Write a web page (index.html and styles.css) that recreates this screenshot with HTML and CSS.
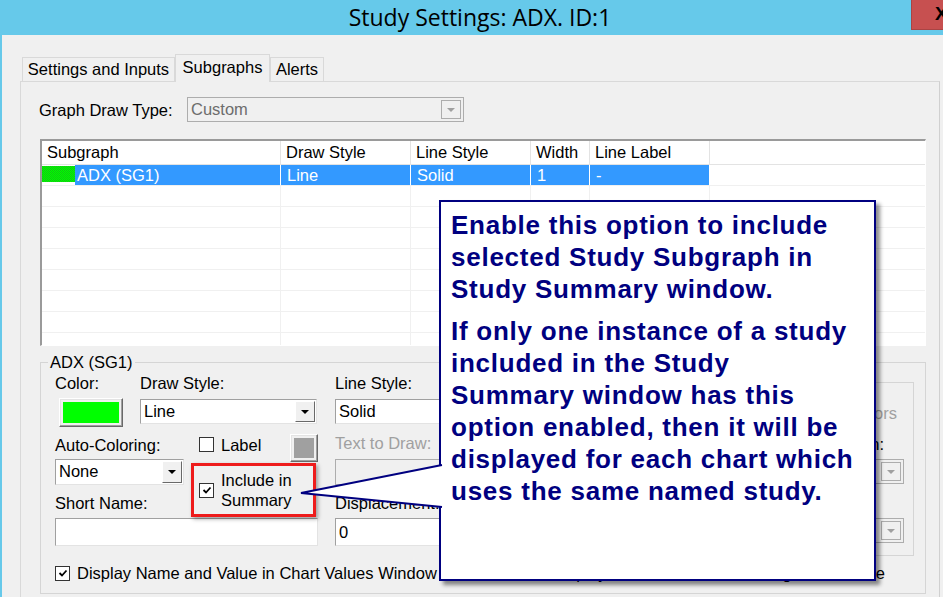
FILE: index.html
```
<!DOCTYPE html>
<html>
<head>
<meta charset="utf-8">
<title>Study Settings: ADX. ID:1</title>
<link rel="stylesheet" href="styles.css">
</head>
<body>
<div class="window">
  <div class="titlebar">
    <div class="title">Study Settings: ADX. ID:1</div>
    <div class="close">X</div>
  </div>
  <div class="client">
    <div class="tabs">
      <div class="tab t1">Settings and Inputs</div>
      <div class="tab active t2">Subgraphs</div>
      <div class="tab t3">Alerts</div>
    </div>
    <div class="panel">
      <div class="drawtype">
        <span class="dt-label">Graph Draw Type:</span>
        <div class="combo disabled w-custom"><span class="val">Custom</span><span class="btn"><i class="arrow"></i></span></div>
      </div>

      <div class="table">
        <div class="tr thead">
          <div class="td">Subgraph</div>
          <div class="td">Draw Style</div>
          <div class="td">Line Style</div>
          <div class="td">Width</div>
          <div class="td">Line Label</div>
          <div class="td last"></div>
        </div>
        <div class="tr sel">
          <div class="td first"><span class="swatch"></span><span class="selname">ADX (SG1)</span></div>
          <div class="td">Line</div>
          <div class="td">Solid</div>
          <div class="td">1</div>
          <div class="td">-</div>
          <div class="td last"></div>
        </div>
        <div class="tr"><div class="td"></div><div class="td"></div><div class="td"></div><div class="td"></div><div class="td"></div><div class="td last"></div></div>
        <div class="tr"><div class="td"></div><div class="td"></div><div class="td"></div><div class="td"></div><div class="td"></div><div class="td last"></div></div>
        <div class="tr"><div class="td"></div><div class="td"></div><div class="td"></div><div class="td"></div><div class="td"></div><div class="td last"></div></div>
        <div class="tr"><div class="td"></div><div class="td"></div><div class="td"></div><div class="td"></div><div class="td"></div><div class="td last"></div></div>
        <div class="tr"><div class="td"></div><div class="td"></div><div class="td"></div><div class="td"></div><div class="td"></div><div class="td last"></div></div>
        <div class="tr"><div class="td"></div><div class="td"></div><div class="td"></div><div class="td"></div><div class="td"></div><div class="td last"></div></div>
        <div class="tr"><div class="td"></div><div class="td"></div><div class="td"></div><div class="td"></div><div class="td"></div><div class="td last"></div></div>
        <div class="tr"><div class="td"></div><div class="td"></div><div class="td"></div><div class="td"></div><div class="td"></div><div class="td last"></div></div>
      </div>

      <fieldset class="group">
        <legend>ADX (SG1)</legend>
        <div class="gtop">
          <div class="colL">
            <div class="rowA">
              <div class="colorCol">
                <div class="lbl">Color:</div>
                <div class="colorbtn"><span class="green"></span></div>
              </div>
              <div class="drawCol">
                <div class="lbl">Draw Style:</div>
                <div class="combo w-draw"><span class="val">Line</span><span class="btn"><i class="arrow"></i></span></div>
              </div>
            </div>
            <div class="rowB">
              <div class="acCol">
                <div class="lbl lbl-ac">Auto-Coloring:</div>
                <div class="combo w-ac"><span class="val">None</span><span class="btn"><i class="arrow"></i></span></div>
                <div class="lbl lbl-sn">Short Name:</div>
              </div>
              <div class="rightCol">
                <div class="lblLine">
                  <span class="cb"></span><span class="cbtext">Label</span>
                  <div class="graybtn"><span class="gray"></span></div>
                </div>
                <div class="redbox">
                  <span class="cb checked"><svg viewBox="0 0 12 12" width="12" height="12"><path d="M2.5 6 L5 8.5 L9.5 3.5" fill="none" stroke="#000" stroke-width="1.8"/></svg></span>
                  <span class="rbtext">Include in<br>Summary</span>
                </div>
              </div>
            </div>
            <div class="input w-sn"></div>
          </div>

          <div class="colM">
            <div class="lbl">Line Style:</div>
            <div class="combo w-mid"><span class="val">Solid</span><span class="btn"><i class="arrow"></i></span></div>
            <div class="lbl dim lbl-ttd">Text to Draw:</div>
            <div class="input disabled-input w-mid ttd"></div>
            <div class="lbl lbl-disp">Displacement:</div>
            <div class="input w-mid disp"><span class="val">0</span></div>
          </div>

          <div class="colR">
            <div class="innergroup">
              <div class="ig-colors dim">Colors</div>
              <div class="ig-label">Position:</div>
              <div class="combo disabled w-ig ig-c1"><span class="val"></span><span class="btn"><i class="arrow"></i></span></div>
              <div class="combo disabled w-ig ig-c2"><span class="val"></span><span class="btn"><i class="arrow"></i></span></div>
            </div>
          </div>
        </div>

        <div class="gbottom">
          <span class="cb checked"><svg viewBox="0 0 12 12" width="12" height="12"><path d="M2.5 6 L5 8.5 L9.5 3.5" fill="none" stroke="#000" stroke-width="1.8"/></svg></span>
          <span class="cbtext">Display Name and Value in Chart Values Window</span>
          <span class="cb checked second"><svg viewBox="0 0 12 12" width="12" height="12"><path d="M2.5 6 L5 8.5 L9.5 3.5" fill="none" stroke="#000" stroke-width="1.8"/></svg></span>
          <span class="cbtext second-text">Display Value in Data Line Using Same Scale</span>
        </div>
      </fieldset>
    </div>
  </div>

  <div class="callout">
    <p>Enable this option to include<br>selected Study Subgraph in<br>Study Summary window.</p>
    <p>If only one instance of a study<br>included in the Study<br>Summary window has this<br>option enabled, then it will be<br>displayed for each chart which<br>uses the same named study.</p>
  </div>
  <svg class="pointer" width="150" height="50" viewBox="0 0 150 50">
    <polygon points="3,31 144,3 148,3 148,45 144,45" fill="#fff"/>
    <polyline points="144,3 3,31 144,45" fill="none" stroke="#000080" stroke-width="2"/>
  </svg>
</div>
</body>
</html>
```

FILE: styles.css
```
* { box-sizing: border-box; }
html, body { margin: 0; padding: 0; }
body {
  width: 943px;
  height: 597px;
  overflow: hidden;
  background: #f0f0f0;
  font-family: "Liberation Sans", Arial, sans-serif;
  font-size: 16.5px;
  color: #000;
}
.window {
  position: relative;
  width: 943px;
  height: 597px;
  border-left: 2px solid #66c9ea;
  background: #f0f0f0;
  overflow: hidden;
}

/* title bar */
.titlebar {
  display: flex;
  height: 35px;
  margin-left: -2px;
  background: #66c9ea;
}
.title {
  flex: 1;
  text-align: center;
  padding-left: 49px;
  font-family: "Open Sans", "Noto Sans", sans-serif;
  font-size: 23px;
  line-height: 35px;
  color: #000;
}
.close {
  width: 32px;
  height: 30px;
  background: #c75050;
  border-left: 1px solid #a94444;
  border-bottom: 1px solid #a94444;
  font-family: "Liberation Sans", Arial, sans-serif;
  font-weight: bold;
  font-size: 19px;
  line-height: 28px;
  padding-left: 23px;
  overflow: hidden;
  white-space: nowrap;
}

/* client area */
.client {
  padding: 19px 0 0 18px;
}
.tabs {
  display: flex;
  align-items: flex-end;
  height: 27px;
  margin-left: 2px;
  position: relative;
  z-index: 2;
}
.tab {
  height: 24px;
  border: 1px solid #d9d9d9;
  border-bottom: none;
  background: #f0f0f0;
  text-align: center;
  line-height: 23px;
  white-space: nowrap;
}
.t1 { width: 153px; }
.t2 { width: 95px; height: 28px; line-height: 25px; margin-bottom: -1px; }
.t3 { width: 54px; }

.panel {
  width: 920px;
  height: 540px;
  border: 1px solid #d9d9d9;
  border-right-color: #d0d0d0;
  padding: 15px 0 0 18px;
}
.drawtype {
  display: flex;
  align-items: center;
  height: 25px;
}
.dt-label { width: 148px; padding-top: 2px; }

/* combos */
.combo {
  display: flex;
  height: 25px;
  background: #fff;
  border: 1px solid;
  border-color: #a0a0a0 #e3e3e3 #e3e3e3 #a0a0a0;
}
.combo .val {
  flex: 1;
  padding-left: 3px;
  line-height: 22px;
  white-space: nowrap;
  overflow: hidden;
}
.combo .btn {
  width: 20px;
  margin: 1px;
  border: 1px solid;
  border-color: #fff #696969 #696969 #fff;
  background: #f0f0f0;
  display: flex;
  align-items: center;
  justify-content: center;
}
.arrow {
  width: 0;
  height: 0;
  border-left: 4px solid transparent;
  border-right: 4px solid transparent;
  border-top: 4px solid #000;
}
.combo.disabled {
  background: #f0f0f0;
  border-color: #adadad;
  color: #6d6d6d;
}
.combo.disabled .btn { border-color: #adadad; margin: 2px 2px 2px 0; }
.combo.disabled .arrow { border-top-color: #a0a0a0; }
.w-custom { width: 277px; }
.w-draw { width: 177px; }
.w-ac { width: 129px; height: 26px; }
.w-mid { width: 215px; }
.w-ig { width: 200px; }

/* table */
.table {
  width: 886px;
  height: 207px;
  margin: 17px 0 0 1px;
  background: #fff;
  border-top: 2px solid #9a9a9a;
  border-left: 2px solid #9a9a9a;
  border-right: 1px solid #fff;
  border-bottom: 1px solid #fff;
  overflow: hidden;
}
.tr {
  display: grid;
  grid-template-columns: 239px 130px 120px 59px 120px 1fr;
  height: 21px;
  border-bottom: 1px solid #f0f0f0;
}
.td {
  border-right: 1px solid #f0f0f0;
  padding-left: 5px;
  line-height: 20px;
  white-space: nowrap;
}
.td.last { border-right: none; }
.thead {
  height: 24px;
  border-bottom: 1px solid #e3e3e3;
}
.thead .td {
  border-right: 1px solid #e3e3e3;
  line-height: 22px;
}
.thead .td.last { border-right: none; }
.sel .td {
  background: #3399ff;
  color: #fff;
  border-right: 1px solid #fff;
  padding-left: 6px;
}
.sel .td.last { background: #fff; border-right: none; }
.sel .td.first {
  display: flex;
  padding-left: 0;
  background: #fff;
}
.swatch {
  width: 33px;
  height: 16px;
  margin-top: 1px;
  background: repeating-conic-gradient(#00ff00 0 25%, #12c412 0 50%) 0 0 / 2px 2px;
}
.selname {
  flex: 1;
  background: #3399ff;
  padding-left: 2px;
}

/* group box */
.group {
  width: 886px;
  height: 241px;
  margin: 7px 0 0 1px;
  padding: 0;
  border: 1px solid #d5d5d5;
  min-width: 0;
}
.group legend {
  margin-left: 7px;
  padding: 0 2px;
  line-height: 18px;
}
.lbl { line-height: 18px; white-space: nowrap; }
.dim { color: #a0a0a0; }
.gtop {
  display: flex;
  align-items: flex-start;
  padding: 3px 11px 0 14px;
}
.colL { width: 263px; }
.rowA { display: flex; }
.colorCol { width: 85px; }
.colorbtn {
  width: 64px;
  height: 29px;
  margin: 6px 0 0 4px;
  border: 1px solid;
  border-color: #fff #696969 #696969 #fff;
  box-shadow: inset -1px -1px #a0a0a0, inset 1px 1px #e3e3e3;
  padding: 3px;
  display: flex;
}
.green { flex: 1; background: #00ff00; }
.drawCol .combo { margin-top: 7px; }
.rowB { display: flex; margin-top: 7px; }
.acCol { width: 129px; }
.lbl-ac { margin-top: 2px; }
.acCol .combo { margin-top: 5px; }
.lbl-sn { margin-top: 9px; }
.rightCol { width: 127px; margin-left: 7px; }
.lblLine {
  display: flex;
  align-items: flex-start;
  height: 29px;
}
.cb {
  flex: none;
  width: 15px;
  height: 15px;
  border: 1px solid #333;
  background: #fff;
  display: flex;
  align-items: center;
  justify-content: center;
}
.lblLine .cb { margin: 3px 0 0 8px; }
.lblLine .cbtext { margin: 2px 0 0 7px; line-height: 18px; }
.graybtn {
  margin-left: auto;
  width: 28px;
  height: 28px;
  border: 1px solid;
  border-color: #fff #696969 #696969 #fff;
  box-shadow: inset -1px -1px #a0a0a0, inset 1px 1px #e3e3e3;
  padding: 3px;
  display: flex;
}
.gray { flex: 1; background: #a0a0a0; }
.redbox {
  width: 125px;
  height: 54px;
  border: 3px solid #ee1c1c;
  box-shadow: 2px 2px 4px rgba(0,0,0,0.35);
  display: flex;
  align-items: center;
  padding: 0 0 0 5px;
}
.rbtext { margin-left: 7px; line-height: 20px; }
.input {
  background: #fff;
  border: 1px solid;
  border-color: #a0a0a0 #e3e3e3 #e3e3e3 #a0a0a0;
}
.input .val { padding-left: 3px; line-height: 26px; }
.w-sn { width: 263px; height: 28px; margin-top: 1px; }

.colM { width: 215px; margin-left: 17px; }
.colM .combo { margin-top: 7px; }
.lbl-ttd { margin-top: 10px; }
.disabled-input { background: #f0f0f0; border-color: #adadad; }
.ttd { height: 26px; margin-top: 7px; }
.lbl-disp { margin-top: 9px; }
.disp { height: 28px; margin-top: 6px; display: flex; }

.colR { margin-left: auto; width: 300px; }
.innergroup {
  margin-top: 8px;
  height: 174px;
  border: 1px solid #d5d5d5;
  display: flex;
  flex-direction: column;
  align-items: flex-end;
}
.ig-colors { margin: 21px 16px 0 0; line-height: 18px; }
.ig-label { margin: 13px 29px 0 0; line-height: 18px; }
.ig-c1 { margin: 6px 9px 0 0; }
.ig-c2 { margin: 34px 9px 0 0; }

.gbottom {
  display: flex;
  align-items: center;
  height: 18px;
  margin-top: 8px;
  padding-left: 14px;
}
.gbottom .cbtext { margin-left: 7px; line-height: 18px; white-space: nowrap; }
.gbottom .second { margin-left: auto; }
.gbottom .second-text { margin-right: 40px; }

/* callout */
.callout {
  position: absolute;
  left: 437px;
  top: 200px;
  width: 437px;
  height: 381px;
  background: #fff;
  border: 2px solid #000080;
  box-shadow: 4px 4px 4px rgba(0,0,0,0.45);
  padding: 7px 0 0 10px;
  color: #000080;
  font-family: "Liberation Sans", Arial, sans-serif;
  font-weight: bold;
  font-size: 26px;
  letter-spacing: 0.75px;
  line-height: 32px;
  z-index: 5;
}
.callout p { margin: 0 0 10px 0; white-space: nowrap; }
.pointer {
  position: absolute;
  left: 296px;
  top: 462px;
  z-index: 6;
}
```
